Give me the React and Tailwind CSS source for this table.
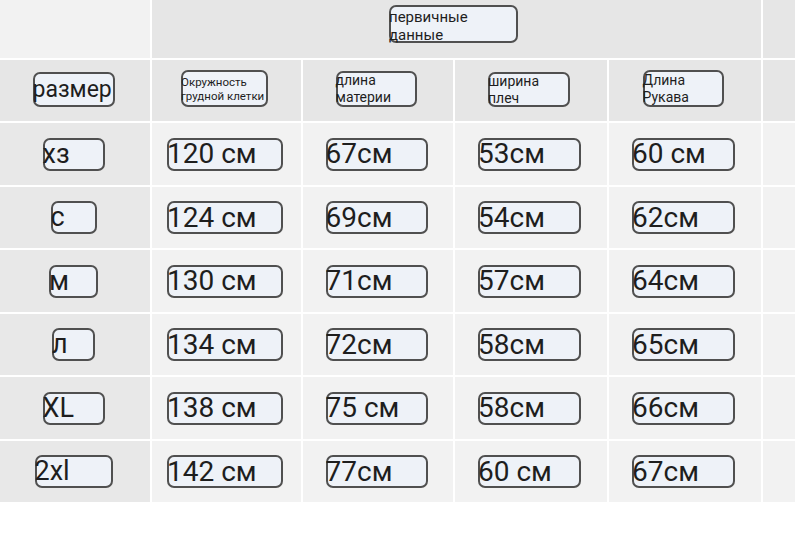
import React from 'react'

const rows = [
	{ size: 'хз', sw: 'w-[62px]', cells: ['120 см', '67см', '53см', '60 см'] },
	{ size: 'с', sw: 'w-[46px]', cells: ['124 см', '69см', '54см', '62см'] },
	{ size: 'м', sw: 'w-[49px]', cells: ['130 см', '71см', '57см', '64см'] },
	{ size: 'л', sw: 'w-[43px]', cells: ['134 см', '72см', '58см', '65см'] },
	{ size: 'XL', sw: 'w-[62px]', cells: ['138 см', '75 см', '58см', '66см'] },
	{ size: '2xl', sw: 'w-[78px]', cells: ['142 см', '77см', '60 см', '67см'] }
]

const cellWidths = ['w-[116px]', 'w-[102px]', 'w-[103px]', 'w-[103px]']

function Tag({ className = '', children }) {
	return (
		<div className={`flex items-center rounded-[7px] border-2 border-[#505050] bg-[#eef2f8] text-[#1e1e1e] ${className}`}>
			<span className="-ml-[2px] whitespace-pre-line">{children}</span>
		</div>
	)
}

export default function App() {
	return (
		<div className="h-[538px] w-[795px] bg-white" style={{ fontFamily: 'Roboto, "Noto Sans", sans-serif' }}>
			<div className="grid grid-cols-[150px_149px_150px_152px_152px_32px] grid-rows-[58px_61px_62px_61px_62px_61px_62px_61px] gap-[2px] bg-white">
				{/* top header */}
				<div className="bg-[#f2f2f2]"></div>
				<div className="col-span-4 flex justify-center bg-[#e6e6e6] pt-[5px] pr-[6px]">
					<Tag className="h-[38px] w-[129px] items-start pt-[1px] text-[15px] leading-[18px]">{'первичные\nданные'}</Tag>
				</div>
				<div className="bg-[#e6e6e6]"></div>

				{/* sub header */}
				<div className="flex items-center justify-center bg-[#e6e6e6] pr-[3px]">
					<Tag className="mb-[3px] h-[35px] w-[82px] text-[23px] leading-none">размер</Tag>
				</div>
				<div className="flex items-center justify-center bg-[#e6e6e6] pr-[4px]">
					<Tag className="mb-[4px] h-[37px] w-[87px] text-[11.5px] leading-[14px]">{'Окружность\nгрудной клетки'}</Tag>
				</div>
				<div className="flex items-center justify-center bg-[#e6e6e6] pr-[4px]">
					<Tag className="mb-[4px] h-[36px] w-[81px] text-[14px] leading-[17px]">{'длина\nматерии'}</Tag>
				</div>
				<div className="flex items-center justify-center bg-[#e6e6e6] pr-[4px]">
					<Tag className="mb-[2px] h-[35px] w-[82px] text-[14px] leading-[17px]">{'ширина\nплеч'}</Tag>
				</div>
				<div className="flex items-center justify-center bg-[#e6e6e6] pr-[4px]">
					<Tag className="mb-[4px] h-[37px] w-[81px] text-[14px] leading-[17px]">{'Длина\nРукава'}</Tag>
				</div>
				<div className="bg-[#e6e6e6]"></div>

				{rows.map((r) => (
					<React.Fragment key={r.size}>
						<div className="flex items-center justify-center bg-[#e8e8e8] pr-[3px]">
							<Tag className={`h-[33px] ${r.sw} text-[27px] leading-none`}>{r.size}</Tag>
						</div>
						{r.cells.map((c, i) => (
							<div key={i} className="flex items-center justify-center bg-[#f2f2f2] pr-[3px]">
								<Tag className={`h-[33px] ${cellWidths[i]} text-[28px] leading-none`}>{c}</Tag>
							</div>
						))}
						<div className="bg-[#f2f2f2]"></div>
					</React.Fragment>
				))}
			</div>
		</div>
	)
}
